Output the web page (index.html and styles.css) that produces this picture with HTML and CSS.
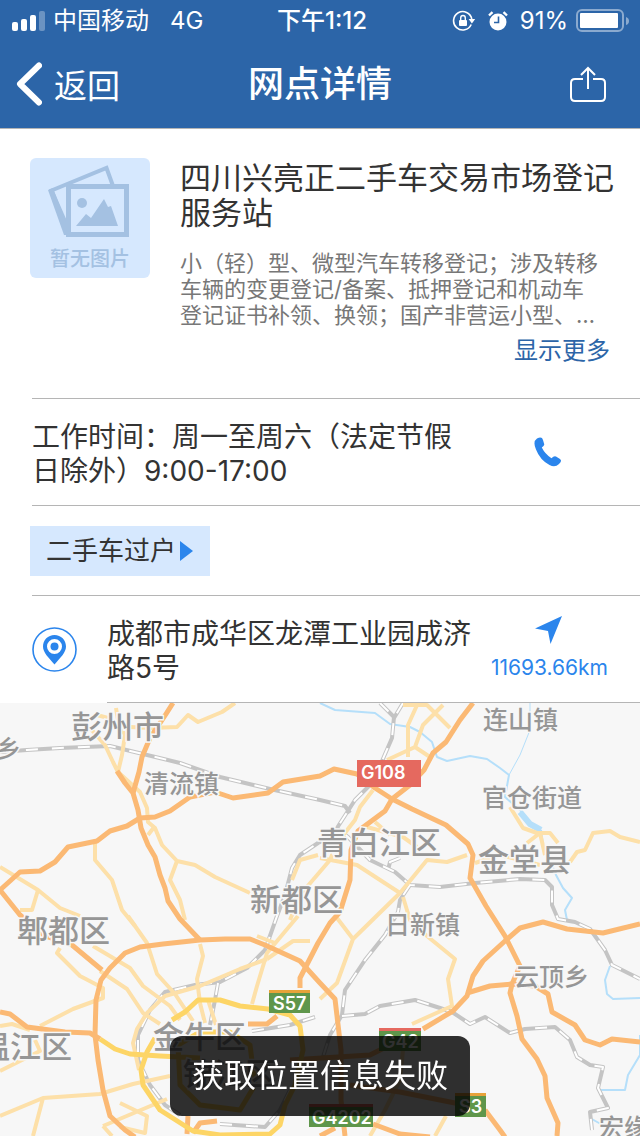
FILE: index.html
```html
<!DOCTYPE html>
<html lang="zh-CN">
<head>
  <meta charset="UTF-8" />
  <meta name="viewport" content="width=device-width, initial-scale=1.0" />
  <title>网点详情</title>
  <link rel="stylesheet" href="styles.css">
</head>
<body>
  <header class="top">
    <div class="status-bar">
      <div class="status-left">
        <svg class="signal" width="34" height="22" viewBox="0 0 34 22">
          <rect x="0" y="12" width="6" height="9" rx="2"/>
          <rect x="9" y="9" width="6" height="12" rx="2"/>
          <rect x="18" y="5" width="6" height="16" rx="2"/>
          <rect x="27" y="1" width="6" height="20" rx="2" opacity=".3"/>
        </svg>
        <span>中国移动</span>
        <span class="network">4G</span>
      </div>
      <div class="clock">下午1:12</div>
      <div class="status-right">
        <svg width="24" height="22" viewBox="0 0 24 22">
          <path d="M19.2 14.5A9.2 9.2 0 1 1 19.8 9" fill="none" stroke="#fff" stroke-width="1.6"/>
          <path d="M16.6 9h6.6l-3.3 4.6z"/>
          <rect x="7" y="10" width="8" height="6" rx="1"/>
          <path d="M8.7 10.5V8a2.3 2.5 0 0 1 4.6 0v2.5" fill="none" stroke="#fff" stroke-width="1.4"/>
        </svg>
        <svg width="20" height="20" viewBox="0 0 20 20">
          <circle cx="10" cy="11" r="8.5"/>
          <path d="M1 4.5L4.5 1.2M19 4.5L15.5 1.2" stroke="#fff" stroke-width="2.4"/>
          <path d="M10.5 5.5V11.5H6" fill="none" stroke="#2c65a8" stroke-width="1.6"/>
        </svg>
        <span>91%</span>
        <svg width="54" height="24" viewBox="0 0 54 24">
          <rect x="1" y="1" width="46" height="21" rx="5" fill="none" stroke="#fff" stroke-opacity=".45" stroke-width="2"/>
          <rect x="4" y="4" width="38" height="15" rx="1"/>
          <path d="M50 8q3 1 3 4t-3 4z" opacity=".45"/>
        </svg>
      </div>
    </div>
    <nav class="nav-bar">
      <button class="back" type="button">
        <svg width="26" height="44" viewBox="0 0 26 44">
          <path d="M23 3.5L4 22L23 40.5" fill="none" stroke="#fff" stroke-width="6" stroke-linecap="round" stroke-linejoin="round"/>
        </svg>
        返回
      </button>
      <h1>网点详情</h1>
      <button class="share" type="button" aria-label="分享">
        <svg width="38" height="38" viewBox="0 0 38 38" fill="none" stroke="#fff" stroke-width="2">
          <path d="M14 14H6q-4 0-4 4v14q0 4 4 4h26q4 0 4-4V18q0-4-4-4h-8"/>
          <path d="M19 24V3M12 10l7-7 7 7"/>
        </svg>
      </button>
    </nav>
  </header>

  <main>
    <section class="branch">
      <div class="no-photo">
        <svg width="84" height="74" viewBox="0 0 84 74">
          <path fill="none" stroke="#a4c1e2" stroke-width="4" d="M21 66.5L3.5 26.5L58.5 4L65 22"/>
          <path fill="#a4c1e2" d="M0 26l5-2 15 40v7h-4z"/>
          <rect x="20.5" y="22.5" width="58" height="48" fill="#d6e8fe" stroke="#a4c1e2" stroke-width="5"/>
          <circle cx="34" cy="39" r="5" fill="#a4c1e2"/>
          <path fill="#a4c1e2" d="M28 62l10-12 5 4 13-19 4 8 3-1 7 20z"/>
        </svg>
        <span>暂无图片</span>
      </div>
      <div class="branch-info">
        <h2>四川兴亮正二手车交易市场登记服务站</h2>
        <p>小（轻）型、微型汽车转移登记；涉及转移车辆的变更登记/备案、抵押登记和机动车登记证书补领、换领；国产非营运小型、…</p>
        <button class="more" type="button">显示更多</button>
      </div>
    </section>

    <section class="row hours">
      <p>工作时间：周一至周六（法定节假日除外）9:00-17:00</p>
      <button class="call" type="button" aria-label="拨打电话">
        <svg width="28" height="30" viewBox="0 0 28 30">
          <path fill="#2b85ec" d="M3 1.5Q8-1 9 3L10.3 7.5Q10 9 7.8 10.5Q11 17 17.5 21.3Q20 18.5 22 19.5L26 22Q28.5 24 25 27Q21 31 15.5 28Q6 23 2 12.5Q-1.5 4.5 3 1.5z"/>
        </svg>
      </button>
    </section>

    <section class="row services">
      <button class="tag" type="button">二手车过户<svg width="13" height="20" viewBox="0 0 13 20"><path fill="#2b85ec" d="M0 0l13 10L0 20z"/></svg></button>
    </section>

    <section class="row address">
      <svg class="pin" width="46" height="46" viewBox="0 0 46 46">
        <circle cx="22.5" cy="22.5" r="21.5" fill="none" stroke="#2b85ec" stroke-width="1.6"/>
        <path fill="#2b85ec" fill-rule="evenodd" d="M22.500 8C29 8 34 13 34 19.500C34 25.500 28.500 30.500 22.500 37.500C16.500 30.500 11 25.500 11 19.500C11 13 16 8 22.500 8zM22.500 12a7.500 7.500 0 1 0 0 15a7.500 7.500 0 1 0 0-15z"/>
        <circle cx="22.5" cy="19.5" r="4" fill="#2b85ec"/>
      </svg>
      <div class="address-body">
        <p>成都市成华区龙潭工业园成济路5号</p>
        <a class="distance" href="#map">
          <svg width="28" height="28" viewBox="0 0 28 28"><path fill="#2b85ec" d="M27 0L15.5 28L13 15L0 12.5z"/></svg>
          11693.66km
        </a>
      </div>
    </section>
  </main>

  <section class="map" id="map">
    <svg viewBox="0 3 640 433" preserveAspectRatio="xMidYMin slice">
      <!-- rivers -->
      <g class="water">
        <path d="M320 3L335 10L375 13L390 24L410 27L420 32L432 42L437 57L447 61L470 56L487 59L500 68L509 75L505 97L520 110L530 123"/>
        <path stroke-width="1" d="M530 3V30L520 55L509 75"/>
        <path stroke-width="6" d="M520 112L530 124L541 130"/>
        <path d="M541 130L543 145L550 160L556 175L563 188L572 198L565 210L567 220"/>
        <path d="M610 266L605 280L607 294L613 299L640 298M640 335V355L628 375L625 390L600 390M590 418L615 432"/>
      </g>

      <!-- railways: grey line, white dashes on top -->
      <defs>
        <g id="rails">
          <path d="M0 52L27 50L60 48L110 46L180 63L220 77L270 89L320 100L345 106L350 113"/>
          <path d="M380 3L394 17L392 38L373 82L355 100L337 128L348 137L370 160L395 172L410 185L440 187L475 183L520 179L545 180L552 187V205L558 219L575 222L590 229L605 250L612 265L640 279"/>
          <path d="M403 3L394 18M400 158L390 162L388 170"/>
          <path d="M410 185L400 200L398 212L385 235L365 260L345 290L342 315L330 335L322 360"/>
          <path d="M337 135L318 143L300 155L292 168L285 195L277 216L265 250L247 268L220 282L195 285L165 292L150 310L138 335V360L150 385L165 405L180 415"/>
          <path d="M342 316L365 314L380 306L415 300L440 308L452 312L470 324L485 317L510 333L525 329L555 327L570 340L577 357L590 365L603 367L598 388L608 408L590 412L592 430"/>
          <path d="M218 283L215 300L210 325M252 331L290 325L315 317M220 424L265 427L280 410L290 390"/>
        </g>
      </defs>
      <use href="#rails" class="rail"/>
      <use href="#rails" class="rail-gap"/>

      <!-- minor roads -->
      <g class="minor">
        <path d="M116 8L118 20L125 35L122 55L118 72M90 28L105 45L113 62L118 72M97 15L108 18"/>
        <path d="M130 27L150 28L177 27L188 15L198 22L222 12L235 3"/>
        <path d="M118 72L140 92L147 108L148 122L155 128L162 145L177 161L195 165L215 177L250 193"/>
        <path d="M155 126L148 135M177 161L170 180L180 200L185 220"/>
        <path d="M95 143V160L112 180L122 210L135 226"/>
        <path d="M0 167L38 190L60 208L80 216M38 190L32 210H20"/>
        <path d="M128 216L147 243L157 274L175 294L193 321"/>
        <path d="M93 246L130 268L143 286L170 306L180 320"/>
        <path d="M100 271L127 289L143 313L160 324"/>
        <path d="M60 248L57 253L80 276L103 288V298L73 309L40 326"/>
        <path d="M200 244L203 256L197 279L200 303L205 323"/>
        <path d="M298 216L267 253L257 286L252 304M257 236L275 243M267 259L293 241L310 241"/>
        <path d="M267 259L240 269L200 286L165 296L147 313L137 329L133 343L139 370"/>
        <path d="M208 300L216 325"/>
        <path d="M0 416L43 398L100 394L133 384L170 376M43 398L33 436"/>
        <path d="M103 426L167 399M120 403L147 416L145 433L120 427M103 426L112 436"/>
        <path d="M0 371L40 351L35 340M0 326L12 324L30 330"/>
        <path d="M418 3L408 25V57M403 5L427 5L450 28M443 5L423 25L415 47L430 57M415 47L387 60"/>
        <path d="M373 90L360 107L355 120L337 143L330 160L300 195L290 220M292 180L300 160L318 155"/>
        <path d="M320 158L357 165L400 193L427 160L447 162L467 155M400 193L353 239L337 283L320 299M337 218L353 239"/>
        <path d="M403 197L410 220L427 236L455 259L448 279L452 306L412 324"/>
        <path d="M367 127L403 137L417 147M375 122L390 135"/>
        <path d="M510 107L523 128L537 133L550 133L558 143M527 143L540 133L545 155M475 163L500 155L540 165"/>
        <path d="M570 162L577 152L585 150L593 133L610 131L620 137L640 142"/>
        <path d="M403 350L400 380L385 410L370 436M446 416L435 436"/>
      </g>

      <!-- highways -->
      <g class="major">
        <path d="M0 190L20 172L40 171L55 162L68 147L97 141L110 131L127 126L140 118L155 117L170 111L190 97L215 92L233 98L268 93L283 82L320 76L334 69L357 74L375 88L392 99L412 109L446 125L468 144L473 155L470 178L486 206L505 236L520 266L512 284L510 293L517 316L522 339L537 359L545 376L547 398L558 423L557 436"/>
        <path d="M173 3L166 14L150 38L142 57L139 72L133 93"/>
        <path d="M117 71L125 83L133 93L138 110L141 128L148 145L155 157L160 175L165 188L168 201L180 219L200 240"/>
        <path d="M0 190L20 215L45 236L72 245L102 270"/>
        <path d="M345 436L341 400V350L337 316L335 299L320 283L300 261L265 245L250 239L225 239L200 240L163 244L140 247L125 253L110 268L101 280L96 300L95 335L98 360L103 390L110 416L125 430L135 437"/>
        <path d="M0 312L10 314L27 327L65 332L90 333L100 339"/>
        <path d="M473 3L460 20L446 42L433 53L424 70L410 85L392 99L385 111L358 131L351 150L350 180L340 212L330 223L318 243L300 278V288"/>
        <path d="M423 329L453 311L467 296L473 276L483 261L505 241L520 228L543 222L567 229L603 233L640 224"/>
        <path d="M467 293L490 286L512 284L535 286L548 294L552 312L575 325L585 340L600 345L612 339L640 342"/>
        <path d="M485 410L500 430L505 437M373 424L400 434L430 437M248 324H267L277 316M188 416L187 434M217 421L200 423L193 433"/>
        <path d="M290 360L370 355L390 345M350 385L400 392L460 404M320 436L335 428"/>
      </g>

      <!-- city ring roads -->
      <g class="ring">
        <path d="M172 320L185 312L198 300L220 300L240 306L268 309L290 315L300 326L303 350L295 385L285 405L280 425L270 434L220 435L193 431L160 410L143 385L141 370L147 352L155 338"/>
        <path d="M100 339L115 349L130 354L160 356L200 358M178 345L180 385L200 405L240 410L255 385L250 345L230 332H200z"/>
      </g>

      <!-- place names -->
      <g class="city">
        <text x="71" y="38">彭州市</text>
        <text x="317" y="154">青白江区</text>
        <text x="478" y="171">金堂县</text>
        <text x="250" y="211">新都区</text>
        <text x="17" y="242">郫都区</text>
        <text x="-21" y="358">温江区</text>
        <text x="153" y="348">金牛区</text>
        <text x="183" y="385">锦江区</text>
      </g>
      <g class="town">
        <text x="-4" y="58">乡</text>
        <text x="144" y="93">清流镇</text>
        <text x="483" y="29">连山镇</text>
        <text x="482" y="107">官仓街道</text>
        <text x="385" y="234">日新镇</text>
        <text x="514" y="286">云顶乡</text>
        <text x="599" y="437">宏缘</text>
      </g>

      <!-- road number shields -->
      <g class="shield">
        <rect x="357" y="60" width="64" height="27" fill="#e5695f"/>
        <text x="361" y="79">G108</text>
        <rect x="269" y="290" width="41" height="23" fill="#5f964b"/>
        <rect x="269" y="290" width="41" height="3" fill="#e8a33a"/>
        <text x="273" y="310">S57</text>
        <rect x="379" y="328" width="42" height="23" fill="#5f964b"/>
        <rect x="379" y="328" width="42" height="3" fill="#e5695f"/>
        <text x="382" y="348">G42</text>
        <rect x="455" y="393" width="31" height="24" fill="#5f964b"/>
        <rect x="455" y="393" width="31" height="3" fill="#e8a33a"/>
        <text x="459" y="413">S3</text>
        <rect x="309" y="404" width="64" height="23" fill="#5f964b"/>
        <rect x="309" y="404" width="64" height="3" fill="#e5695f"/>
        <text x="312" y="424">G4202</text>
      </g>
    </svg>
  </section>

  <div class="toast" role="status">获取位置信息失败</div>
</body>
</html>
```
FILE: styles.css
```css
:root {
  --primary: #2c65a8;
  --accent: #2b85ec;
  --tint: #d6e8fe;
  --text: #333;
  --muted: #777;
  --line: #b5b5b5;
}

* { box-sizing: border-box; margin: 0; padding: 0; }

body {
  display: flex;
  flex-direction: column;
  min-height: 100vh;
  font-family: Inter, "Noto Sans CJK SC", sans-serif;
  font-weight: 400;
  color: var(--text);
  background: #fff;
}

button {
  font: inherit;
  color: inherit;
  background: none;
  border: 0;
  cursor: pointer;
}

svg { display: block; flex: none; }

.top {
  background: var(--primary);
  border-bottom: 1px solid var(--line);
  color: #fff;
  fill: #fff;
}

.status-bar, .nav-bar {
  display: grid;
  grid-template-columns: 1fr auto 1fr;
  align-items: center;
}

.status-bar {
  height: 40px;
  padding: 2px 12px 0;
  font-size: 24px;
  line-height: 38px;
}

.status-left, .status-right {
  display: flex;
  align-items: center;
  gap: 7px;
}

.network { margin-left: 14px; }

.clock {
  padding-left: 4px;
  font-weight: 500;
}

.status-right {
  justify-content: flex-end;
  gap: 8px;
  margin-right: -2px;
}

.status-right svg + svg { margin: 0 4px; }

.nav-bar {
  height: 88px;
  padding: 0 16px;
}

.back {
  display: flex;
  align-items: center;
  justify-self: start;
  gap: 12px;
  font-size: 33px;
}

.nav-bar h1 {
  font-size: 36px;
  font-weight: 500;
  line-height: 44px;
}

.share {
  justify-self: end;
  margin-right: 17px;
}

.branch {
  display: flex;
  gap: 30px;
  min-height: 269px;
  padding: 29px 30px 24px;
}

.no-photo {
  display: flex;
  flex-direction: column;
  align-items: center;
  gap: 8px;
  flex: none;
  width: 120px;
  height: 120px;
  padding-top: 6px;
  border-radius: 6px;
  background: var(--tint);
  color: #a4c1e2;
  font-size: 20px;
  font-weight: 500;
  line-height: 26px;
}

.branch-info {
  display: flex;
  flex-direction: column;
  flex: 1;
  padding-top: 2px;
}

.branch-info h2 {
  margin-right: -8px;
  font-size: 31px;
  font-weight: 400;
  line-height: 35px;
}

.branch-info p {
  margin: 20px 6px 0 0;
  font-size: 22px;
  line-height: 26px;
  color: var(--muted);
}

.more {
  align-self: flex-end;
  margin-top: 6px;
  font-size: 24px;
  line-height: 34px;
  color: var(--primary);
}

.row {
  display: flex;
  align-items: center;
  margin-left: 32px;
  border-top: 1px solid var(--line);
  font-size: 28px;
  line-height: 34px;
}

.row p { padding-top: 4px; }

.hours {
  justify-content: space-between;
  min-height: 107px;
  padding-right: 78px;
}

.hours p { width: 436px; }

.services { min-height: 90px; }

.tag {
  display: flex;
  align-items: center;
  gap: 4px;
  height: 50px;
  margin-left: -2px;
  padding: 0 17px 0 16px;
  background: var(--tint);
  font-size: 26px;
}

.address {
  align-items: stretch;
  gap: 29px;
}

.pin { align-self: center; }

.address-body {
  display: flex;
  align-items: center;
  justify-content: space-between;
  flex: 1;
  min-height: 107px;
  padding-right: 32px;
  border-bottom: 1px solid var(--line);
}

.address-body p {
  flex: 1;
  max-width: 376px;
}

.distance {
  display: flex;
  flex-direction: column;
  align-items: center;
  gap: 9px;
  color: var(--accent);
  font-size: 21px;
  line-height: 30px;
  text-decoration: none;
}

.map {
  display: flex;
  flex: 1;
  min-height: 400px;
  overflow: hidden;
  background: #f7f7f7;
}

.map svg {
  width: 100%;
  flex: 1;
}

.water, .rail, .rail-gap, .minor, .major, .ring {
  fill: none;
  stroke-linejoin: round;
}

.water { stroke: #b5dffa; stroke-width: 2px; }
.rail { stroke: #c4c4c4; stroke-width: 4px; }
.rail-gap { stroke: #fff; stroke-width: 2px; stroke-dasharray: 12 14; }
.minor { stroke: #fde0a9; stroke-width: 4px; }
.major { stroke: #fbb974; stroke-width: 5px; }
.ring { stroke: #fdd566; stroke-width: 5px; }

.city, .town {
  fill: #969696;
  stroke: #f7f7f7;
  stroke-width: 3px;
  paint-order: stroke;
  font-weight: 500;
}

.city { font-size: 31px; }
.town { font-size: 25px; }

.shield {
  fill: #fff;
  font-size: 18px;
  font-weight: 600;
}

.toast {
  position: fixed;
  left: 50%;
  bottom: 20px;
  transform: translateX(-50%);
  padding: 0 22px;
  border-radius: 12px;
  background: rgba(0, 0, 0, 0.81);
  color: #fff;
  font-size: 32px;
  line-height: 80px;
  white-space: nowrap;
}
```
